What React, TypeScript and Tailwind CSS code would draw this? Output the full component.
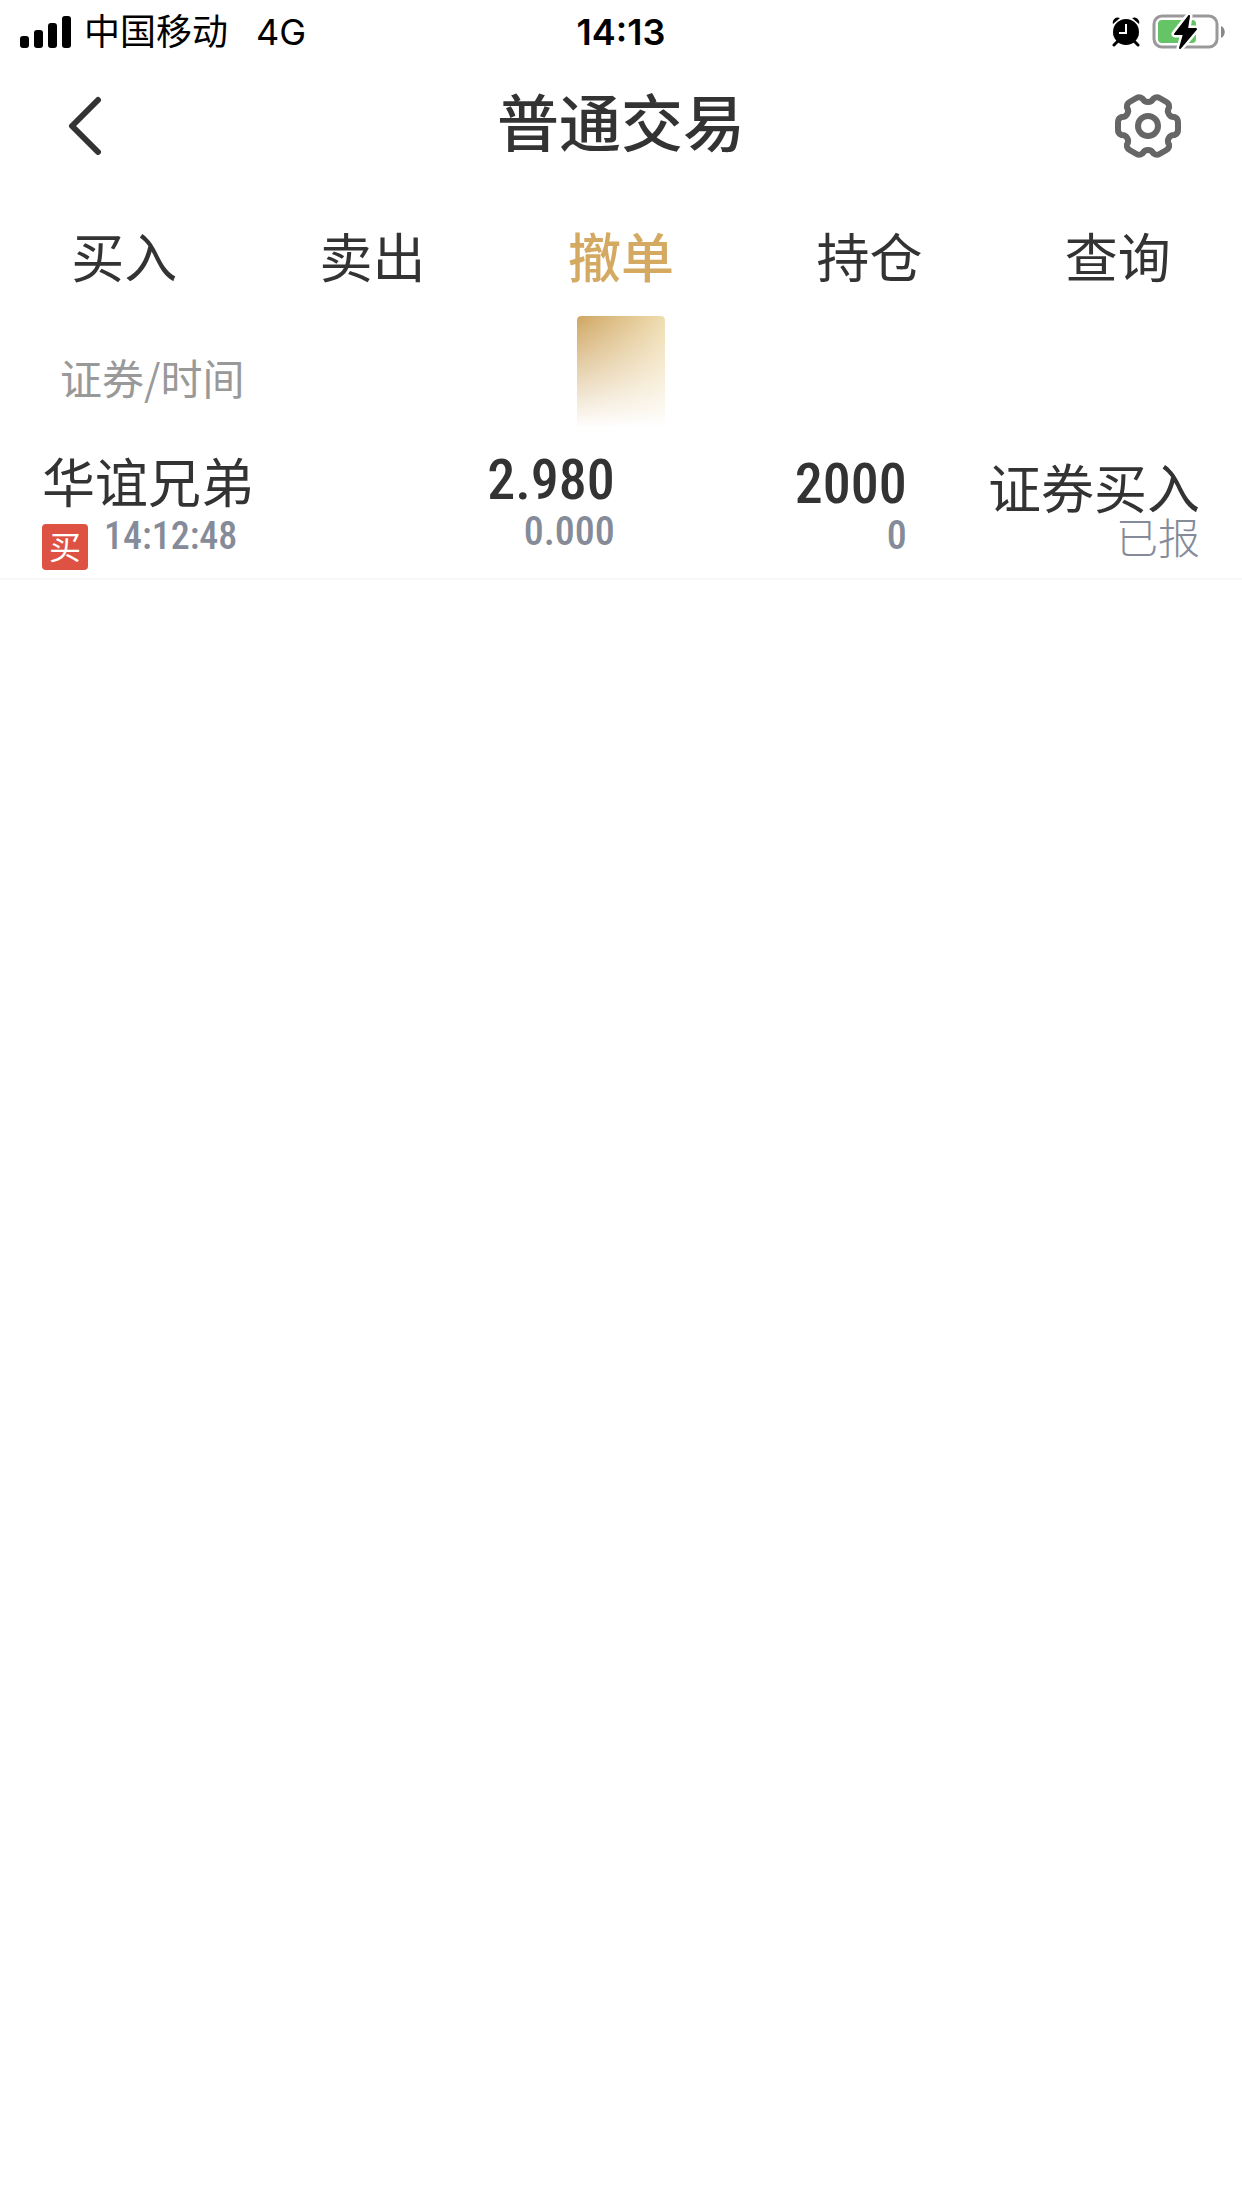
import clsx from "clsx";

const tabs = ["买入", "卖出", "撤单", "持仓", "查询"];

const orders = [
  {
    name: "华谊兄弟",
    side: "买",
    time: "14:12:48",
    price: "2.980",
    dealPrice: "0.000",
    amount: "2000",
    dealAmount: "0",
    type: "证券买入",
    status: "已报",
  },
];

// one sixth of the gear outline, rotated around the centre
function gearPath() {
  const at = (x: number, y: number, deg: number) => {
    const a = (deg * Math.PI) / 180;
    const px = x * Math.cos(a) - y * Math.sin(a);
    const py = x * Math.sin(a) + y * Math.cos(a);
    return `${px.toFixed(2)} ${py.toFixed(2)}`;
  };
  let d = `M${at(30, -4, 0)}`;
  for (let i = 0; i < 6; i++) {
    const r = i * 60;
    d += `L${at(30, 4, r)}Q${at(30, 7.5, r)} ${at(26.5, 9, r)}`;
    d += `A6 6 0 0 0 ${at(26.5, -9, r + 60)}Q${at(30, -7.5, r + 60)} ${at(30, -4, r + 60)}`;
  }
  return d + "Z";
}

function StatusBar() {
  return (
    <div className="grid h-16 grid-cols-3 items-center px-4 font-[Inter,'Noto_Sans_CJK_SC',sans-serif] text-4xl text-black">
      <div className="flex items-center gap-3 pl-1">
        <svg className="h-8 w-[52px]" viewBox="0 0 52 32" fill="currentColor">
          <rect x="0" y="20" width="9" height="12" rx="3" />
          <rect x="14" y="14" width="9" height="18" rx="3" />
          <rect x="28" y="7" width="9" height="25" rx="3" />
          <rect x="42" y="0" width="9" height="32" rx="3" />
        </svg>
        <span>中国移动</span>
        <span className="ml-4">4G</span>
      </div>
      <div className="text-center font-semibold">14:13</div>
      <div className="flex items-center justify-end gap-3">
        <svg className="h-[30px] w-7" viewBox="0 0 28 30">
          <circle cx="14" cy="15" r="13" />
          <path d="M1 7a5 5 0 0 1 7-6z" />
          <path d="M27 7a5 5 0 0 0-7-6z" />
          <path d="M6 24l-4 4M22 24l4 4" stroke="black" strokeWidth="3" strokeLinecap="round" />
          <path d="M14 7v9H7" fill="none" stroke="white" strokeWidth="2" />
        </svg>
        <svg className="h-9 w-[74px]" viewBox="0 0 74 36">
          <rect x="2" y="2" width="63" height="31" rx="8" fill="white" stroke="#9b989c" strokeWidth="3" />
          <path d="M69 12c5 2 5 10 0 12z" fill="#8a878b" />
          <rect x="6" y="6" width="38" height="23" rx="4" fill="#65c466" />
          <path d="M37 2L23 20h9L28 34l16-19h-9z" fill="white" stroke="white" strokeWidth="7" strokeLinejoin="round" />
          <path d="M37 2L23 20h9L28 34l16-19h-9z" fill="black" stroke="black" strokeWidth="2" strokeLinejoin="round" />
        </svg>
      </div>
    </div>
  );
}

function Header() {
  return (
    <header className="grid h-[124px] grid-cols-3 items-center px-15">
      <button aria-label="返回" className="justify-self-start p-2">
        <svg className="h-[60px] w-9" viewBox="0 0 36 60" fill="none" stroke="#333" strokeWidth="6" strokeLinecap="round" strokeLinejoin="round">
          <path d="M30 4L4 30l26 26" />
        </svg>
      </button>
      <h1 className="whitespace-nowrap pb-3 text-center text-[62px] font-medium leading-none text-[#333]">普通交易</h1>
      <button aria-label="设置" className="justify-self-end">
        <svg className="h-[68px] w-[68px]" viewBox="-34 -34 68 68" fill="none" stroke="#666" strokeWidth="6" strokeLinejoin="round">
          <path d={gearPath()} />
          <circle r="10" />
        </svg>
      </button>
    </header>
  );
}

function Tabs() {
  return (
    <nav className="grid h-32 grid-cols-5">
      {tabs.map((tab) => {
        const active = tab === "撤单";
        return (
          <button
            key={tab}
            className={clsx(
              "relative pt-2 text-[53px]",
              active ? "font-medium text-[#d4aa62]" : "text-[#333]"
            )}
          >
            {tab}
            {active && (
              <span className="absolute left-1/2 top-full h-28 w-22 -translate-x-1/2 rounded-t bg-gradient-to-r from-[#cfa662] to-[#efdcb0] mask-b-from-0% mask-b-to-100%" />
            )}
          </button>
        );
      })}
    </nav>
  );
}

function Orders() {
  const num = "font-['Roboto_Condensed',Roboto,sans-serif]";
  return (
    <table className="w-full table-fixed border-collapse">
      <thead>
        <tr className="h-[124px]">
          <th className="w-[29%] pb-1 pl-15 text-left text-[42px] font-normal text-[#999]">证券/时间</th>
          <th className="w-[20.5%]" />
          <th className="w-[23.5%]" />
          <th className="w-[27%]" />
        </tr>
      </thead>
      <tbody>
        {orders.map((o) => (
          <tr key={o.name} className="border-b-2 border-[#f7f7f7] align-top text-[#333]">
            <td className="pb-2 pl-[42px] pt-2">
              <div className="text-[53px] leading-[64px]">{o.name}</div>
              <div className="flex items-start gap-4 pt-2">
                <span className="mt-1 flex h-[46px] w-[46px] items-center justify-center rounded bg-[#de5243] pb-1 text-[32px] leading-none text-white">
                  {o.side}
                </span>
                <span className={clsx(num, "text-[38px] font-medium leading-8 text-[#858b98]")}>{o.time}</span>
              </div>
            </td>
            <td className={clsx(num, "pt-3 text-right font-medium")}>
              <div className="text-[56px] leading-[56px]">{o.price}</div>
              <div className="text-[40px] leading-[48px] text-[#858b98]">{o.dealPrice}</div>
            </td>
            <td className={clsx(num, "pt-4 text-right font-medium")}>
              <div className="text-[56px] leading-[56px]">{o.amount}</div>
              <div className="text-[40px] leading-[48px] text-[#858b98]">{o.dealAmount}</div>
            </td>
            <td className="pr-[42px] pt-4 text-right">
              <div className="text-[53px] leading-[60px]">{o.type}</div>
              <div className="text-[42px] font-light leading-[40px] text-[#858b98]">{o.status}</div>
            </td>
          </tr>
        ))}
      </tbody>
    </table>
  );
}

export default function App() {
  return (
    <div className="min-h-screen bg-white font-['Noto_Sans_CJK_SC',sans-serif]">
      <StatusBar />
      <Header />
      <Tabs />
      <Orders />
    </div>
  );
}
